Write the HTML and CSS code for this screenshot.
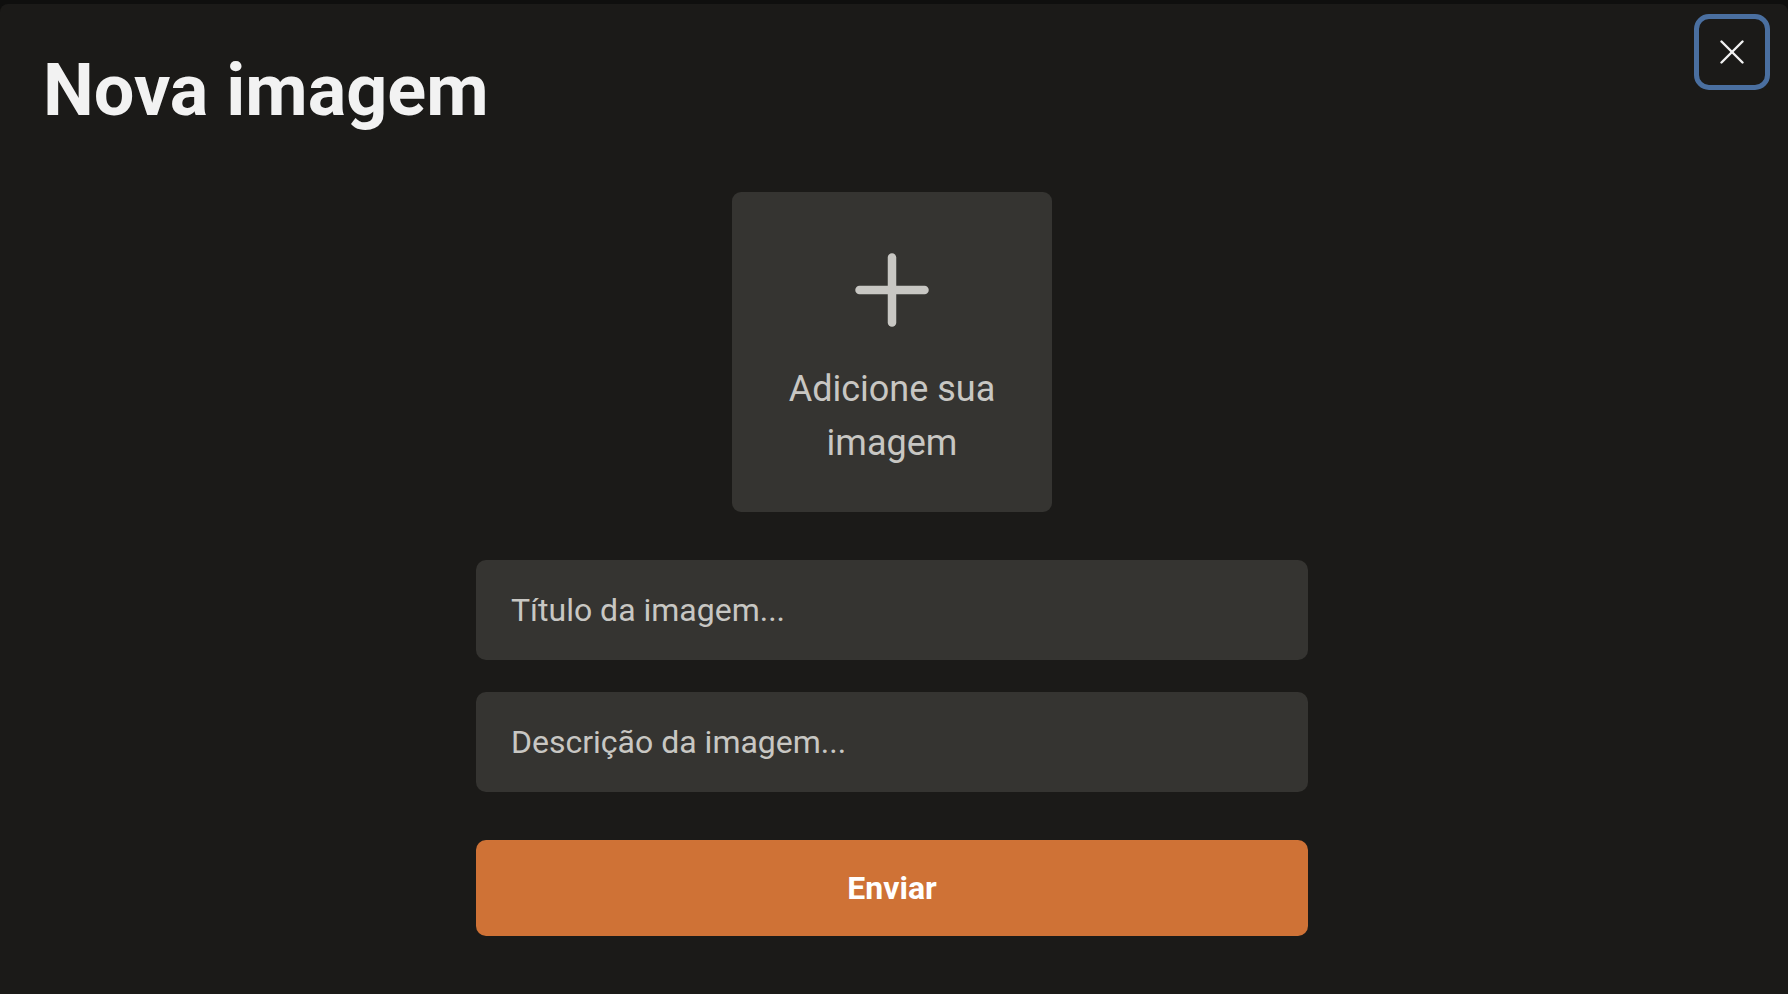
FILE: index.html
```html
<!DOCTYPE html>
<html lang="pt-BR">
<head>
<meta charset="utf-8">
<title>Nova imagem</title>
<link rel="stylesheet" href="styles.css">
</head>
<body>
<div class="modal">
  <header class="modal-header">
    <h1 class="modal-title">Nova imagem</h1>
  </header>
  <button class="close-btn" type="button" aria-label="Fechar">
    <svg width="24" height="24" viewBox="0 0 24 24" fill="none" stroke="#f2f2f2" stroke-width="2.4" stroke-linecap="round">
      <line x1="1.5" y1="1.5" x2="22.5" y2="22.5"/>
      <line x1="22.5" y1="1.5" x2="1.5" y2="22.5"/>
    </svg>
  </button>
  <form class="modal-body">
    <label class="upload">
      <svg class="plus" width="74" height="74" viewBox="0 0 74 74" fill="none" stroke="#c8c7c3" stroke-width="8.5" stroke-linecap="round">
        <line x1="37" y1="4.5" x2="37" y2="69.5"/>
        <line x1="4.5" y1="37" x2="69.5" y2="37"/>
      </svg>
      <span class="upload-text">Adicione sua imagem</span>
    </label>
    <div class="field"><span class="placeholder">Título da imagem...</span></div>
    <div class="field"><span class="placeholder">Descrição da imagem...</span></div>
    <button class="submit" type="button">Enviar</button>
  </form>
</div>
</body>
</html>
```

FILE: styles.css
```css
* { box-sizing: border-box; }
html, body { margin: 0; padding: 0; }
body {
  background: #0f0f0e;
  font-family: Roboto, "Liberation Sans", sans-serif;
  height: 994px;
  overflow: hidden;
}
.modal {
  position: relative;
  margin-top: 4px;
  height: 990px;
  background: #1b1a18;
  border-radius: 8px 8px 0 0;
}
.modal-header {
  padding: 44px 0 0 43px;
}
.modal-title {
  margin: 0;
  font-size: 72px;
  line-height: 86px;
  font-weight: 700;
  color: #f2f2f2;
}
.close-btn {
  position: absolute;
  top: 10px;
  right: 18px;
  width: 76px;
  height: 76px;
  border: 5px solid #4a6fa0;
  border-radius: 15px;
  background: transparent;
  display: flex;
  align-items: center;
  justify-content: center;
  padding: 0;
}
.modal-body {
  margin: 58px 0 0 0;
  padding-right: 4px;
  display: flex;
  flex-direction: column;
  align-items: center;
}
.upload {
  width: 320px;
  height: 320px;
  background: #353431;
  border-radius: 9px;
  display: flex;
  flex-direction: column;
  align-items: center;
  padding-top: 61px;
}
.plus { display: block; }
.upload-text {
  margin-top: 35px;
  width: 230px;
  text-align: center;
  font-size: 36px;
  line-height: 54px;
  color: #c8c7c3;
}
.field {
  width: 832px;
  height: 100px;
  margin-top: 48px;
  background: #353431;
  border-radius: 10px;
  display: flex;
  align-items: center;
  padding-left: 35px;
}
.field + .field { margin-top: 32px; }
.placeholder {
  font-size: 32px;
  color: #c8c7c3;
}
.submit {
  width: 832px;
  height: 96px;
  margin-top: 48px;
  border: 0;
  border-radius: 10px;
  background: #cf7236;
  color: #ffffff;
  font-family: Roboto, "Liberation Sans", sans-serif;
  font-size: 32px;
  font-weight: 700;
}
```
